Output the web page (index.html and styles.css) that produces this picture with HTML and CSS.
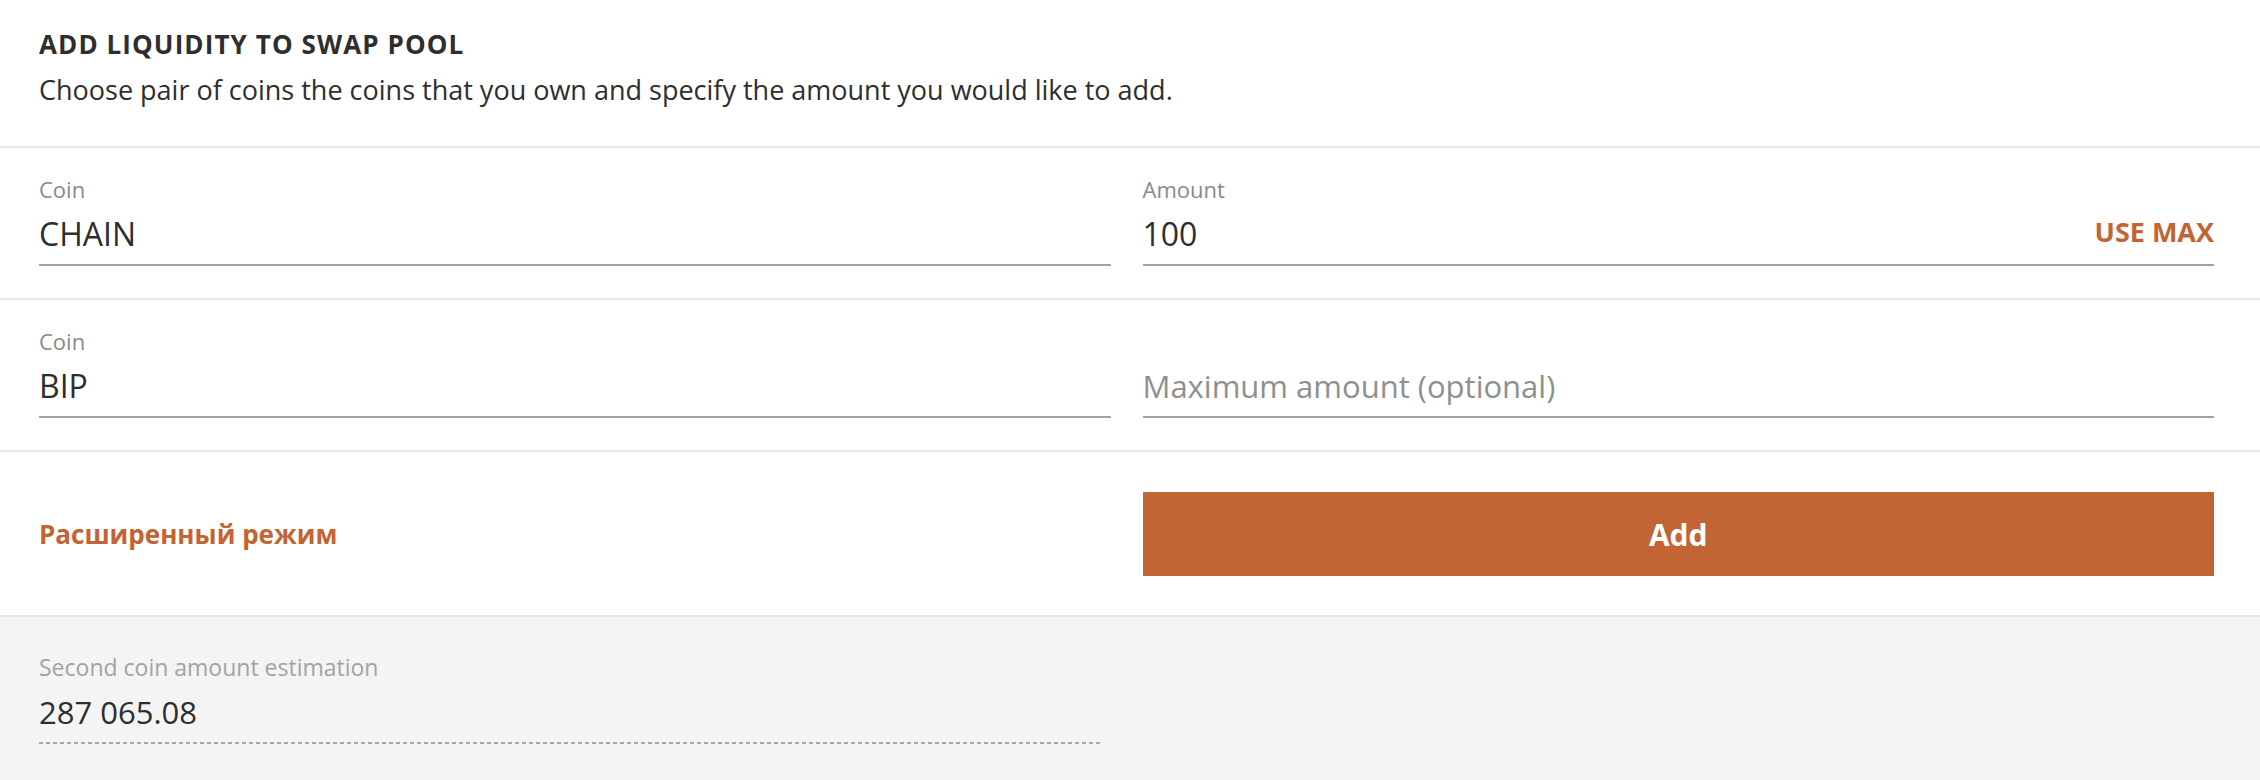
FILE: index.html
```html
<!DOCTYPE html>
<html lang="en">
<head>
<meta charset="utf-8">
<title>Add liquidity to swap pool</title>
<link rel="stylesheet" href="styles.css">
</head>
<body>
<section class="panel">
  <header class="panel-head">
    <h1 class="panel-title">Add liquidity to swap pool</h1>
    <p class="panel-desc">Choose pair of coins the coins that you own and specify the amount you would like to add.</p>
  </header>

  <div class="form-row">
    <div class="field">
      <div class="field-label">Coin</div>
      <div class="field-control"><span class="field-value">CHAIN</span></div>
    </div>
    <div class="field">
      <div class="field-label">Amount</div>
      <div class="field-control"><span class="field-value">100</span><button class="use-max" type="button">USE MAX</button></div>
    </div>
  </div>

  <div class="form-row">
    <div class="field">
      <div class="field-label">Coin</div>
      <div class="field-control"><span class="field-value">BIP</span></div>
    </div>
    <div class="field">
      <div class="field-label field-label--empty"></div>
      <div class="field-control"><span class="field-value field-value--placeholder">Maximum amount (optional)</span></div>
    </div>
  </div>

  <div class="form-row form-row--actions">
    <div class="actions-left"><a class="advanced-link" href="#">Расширенный режим</a></div>
    <button class="submit-btn" type="button">Add</button>
  </div>

  <div class="estimate">
    <div class="estimate-field">
      <div class="estimate-label">Second coin amount estimation</div>
      <div class="estimate-value">287 065.08</div>
      <div class="estimate-line"></div>
    </div>
  </div>
</section>
</body>
</html>
```

FILE: styles.css
```css
* { box-sizing: border-box; }

html, body {
  margin: 0;
  padding: 0;
  background: #ffffff;
}

body {
  font-family: "Open Sans", "Noto Sans", sans-serif;
  color: #2e2e2e;
}

.panel {
  width: 100%;
}

.panel-head {
  padding: 29px 46px 39px 39px;
  border-bottom: 2px solid #e6e6e6;
}

.panel-title {
  margin: 0;
  font-size: 26px;
  line-height: 30px;
  font-weight: 700;
  letter-spacing: 1.1px;
  text-transform: uppercase;
  color: #2e2e2e;
}

.panel-desc {
  margin: 14px 0 0;
  font-size: 27px;
  line-height: 34px;
  color: #2e2e2e;
}

.form-row {
  display: grid;
  grid-template-columns: 1fr 1fr;
  column-gap: 32px;
  padding: 28px 46px 32px 39px;
  border-bottom: 2px solid #e6e6e6;
}

.field-label {
  height: 26px;
  font-size: 22px;
  line-height: 26px;
  color: #8a8a8a;
}

.field-control {
  display: flex;
  align-items: center;
  justify-content: space-between;
  margin-top: 12px;
  padding-bottom: 10px;
  border-bottom: 2px solid #a0a0a0;
}

.field-value {
  font-size: 32px;
  line-height: 40px;
  color: #2e2e2e;
}

.field-value--placeholder {
  font-size: 31px;
  color: #8f8f8f;
}

.use-max {
  border: 0;
  background: none;
  padding: 0;
  margin: 0 0 4px;
  font-family: inherit;
  font-size: 27px;
  line-height: 32px;
  font-weight: 700;
  color: #c26434;
  cursor: pointer;
}

.form-row--actions {
  align-items: center;
  padding-top: 40px;
  padding-bottom: 39px;
}

.advanced-link {
  font-size: 26px;
  line-height: 34px;
  font-weight: 700;
  color: #c26434;
  text-decoration: none;
}

.submit-btn {
  height: 84px;
  border: 0;
  border-radius: 0;
  background: #c26434;
  color: #ffffff;
  font-family: inherit;
  font-size: 30px;
  font-weight: 700;
  cursor: pointer;
}

.estimate {
  display: grid;
  grid-template-columns: 1fr 1fr;
  column-gap: 48px;
  padding: 35px 46px 36px 39px;
  background: #f4f4f4;
}

.estimate-label {
  font-size: 23px;
  line-height: 30px;
  color: #a3a3a3;
}

.estimate-value {
  margin-top: 11px;
  font-size: 31px;
  line-height: 38px;
  color: #2e2e2e;
}

.estimate-line {
  margin-top: 11px;
  height: 2px;
  background-image: linear-gradient(to right, #a8a8a8 4px, transparent 4px);
  background-size: 7px 2px;
  background-repeat: repeat-x;
}
```
